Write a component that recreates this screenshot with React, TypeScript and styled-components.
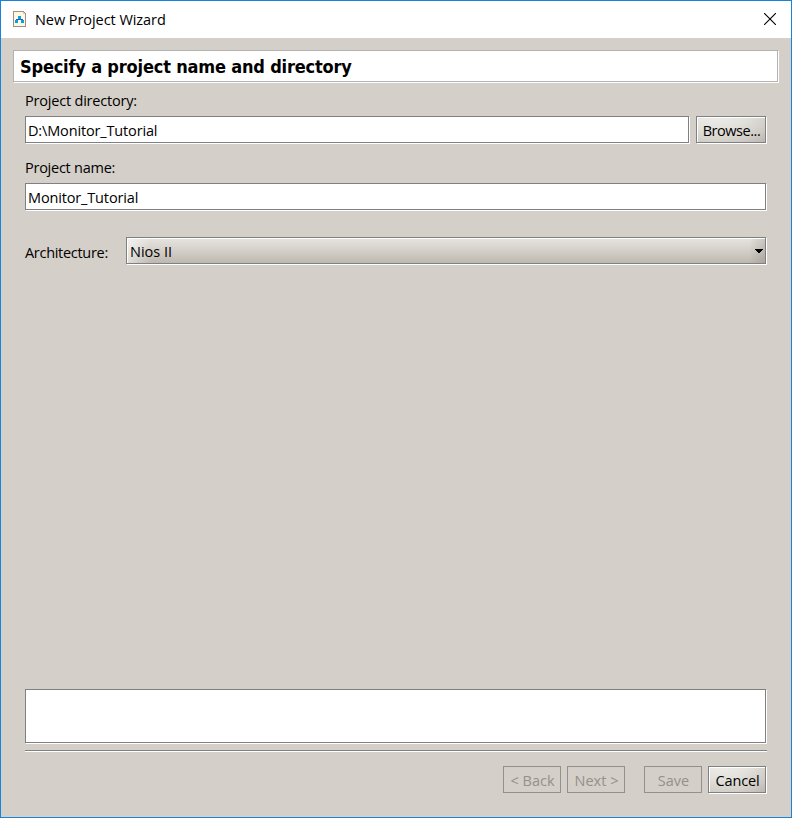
import React from 'react';
import styled, { createGlobalStyle, css } from 'styled-components';

const GlobalStyle = createGlobalStyle`
  * { box-sizing: border-box; }
  body { margin: 0; background: #d4cfc8; }
`;

const etched = css`
  border: 1px solid #808080;
  box-shadow: 1px 1px 0 #fff;
`;

const Window = styled.div`
  width: 792px;
  height: 818px;
  display: flex;
  flex-direction: column;
  border: 1px solid #1883d7;
  background: #d4cfc8;
  color: #000;
  font: 14.5px/20px 'Open Sans', 'Noto Sans', sans-serif;
  white-space: nowrap;
`;

const TitleBar = styled.header`
  display: flex;
  align-items: flex-start;
  height: 37px;
  padding: 9px 15px 0 12px;
  background: #fff;
`;

const Title = styled.h1`
  flex: 1;
  margin: 0 0 0 9px;
  font: inherit;
  letter-spacing: -0.06px;
`;

const AppIcon = styled.svg`
  margin-top: 1px;
`;

const CloseButton = styled.button`
  display: flex;
  margin: 3px 0 0;
  padding: 0;
  border: 0;
  background: none;
`;

const Heading = styled.h2`
  height: 32px;
  margin: 12px 13px 0 12px;
  padding: 5px 6px 0;
  border: 1px solid #b2b2b2;
  box-shadow: 1px 1px 0 #fff;
  background: #fff;
  font: bold 18px/22px 'DejaVu Sans Condensed', 'DejaVu Sans', sans-serif;
  letter-spacing: -0.18px;
`;

const Form = styled.main`
  flex: 1;
  display: flex;
  flex-direction: column;
  padding: 9px 25px 0 24px;
`;

const Label = styled.label<{ $spacing?: number }>`
  letter-spacing: ${(p) => p.$spacing ?? -0.2}px;
`;

const FieldRow = styled.div`
  display: flex;
  gap: 7px;
  margin: 5px 0 15px;
`;

const TextField = styled.div`
  ${etched}
  flex: 1;
  height: 27px;
  padding: 4px 2px 0;
  background: #fff;
  letter-spacing: -0.15px;
`;

const Button = styled.button<{ $width: number; $spacing?: number }>`
  ${etched}
  width: ${(p) => p.$width}px;
  height: 27px;
  padding: 4px 0 0 1px;
  display: flex;
  justify-content: center;
  align-items: flex-start;
  background: radial-gradient(ellipse 120% 190% at 25% -35%, #f4f3f1 0%, #e3e1dc 45%, #d0ccc5 75%, #b5b1aa 100%);
  box-shadow: 1px 1px 0 #fff, inset 1px 1px 0 #fff;
  color: #000;
  font: inherit;
  letter-spacing: ${(p) => p.$spacing ?? 0}px;

  &:disabled {
    border-color: #94908b;
    background: none;
    box-shadow: none;
    color: #94908b;
  }
`;

const SelectRow = styled.div`
  display: flex;
  margin-top: 12px;
`;

const SelectLabel = styled(Label)`
  width: 101px;
  padding-top: 6px;
`;

const Select = styled.div`
  ${etched}
  flex: 1;
  display: flex;
  justify-content: space-between;
  height: 27px;
  padding: 4px 2px 0 3px;
  background:
    linear-gradient(to right, transparent calc(100% - 16px), rgba(90, 85, 75, 0.2)),
    linear-gradient(to right, rgba(255, 255, 255, 0.55), transparent 24px),
    linear-gradient(#e6e4e0, #d4d0c9 50%, #bdb9b1);
  box-shadow: 1px 1px 0 #fff, inset 1px 1px 0 #fff;
`;

const Arrow = styled.svg`
  margin-top: 7px;
`;

const MessageArea = styled.div`
  ${etched}
  height: 54px;
  margin: auto 0 7px;
  background: #fff;
`;

const Divider = styled.hr`
  width: calc(100% + 1px);
  height: 2px;
  margin: 0;
  border: 0;
  border-top: 1px solid #808080;
  border-bottom: 1px solid #fff;
`;

const Footer = styled.footer`
  display: flex;
  justify-content: flex-end;
  gap: 6px;
  padding: 14px 25px 24px;
`;

const ButtonGroup = styled.div`
  display: flex;
  gap: 6px;
  margin-right: 13px;
`;

export default function App() {
  return (
    <>
      <GlobalStyle />
      <Window>
        <TitleBar>
          <AppIcon width="13" height="16" viewBox="0 0 13 16" shapeRendering="crispEdges">
            <path d="M.5.5h10l2 2v13H.5z" fill="#fff8e1" stroke="#a18f83" />
            <path d="M10.5 1v1.5H12" fill="none" stroke="#d9cbbb" />
            <path d="M6.5 8v1M3.5 10V8.5h6V10" fill="none" stroke="#2b6597" />
            <path d="M5 5h3v3H5zM2 9h3v3H2zM8 9h3v3H8z" fill="#00a2f0" />
          </AppIcon>
          <Title>New Project Wizard</Title>
          <CloseButton aria-label="Close">
            <svg width="12" height="12" viewBox="0 0 12 12">
              <path d="M0 0l12 12M12 0L0 12" stroke="#000" strokeWidth="1.1" />
            </svg>
          </CloseButton>
        </TitleBar>
        <Heading>Specify a project name and directory</Heading>
        <Form>
          <Label>Project directory:</Label>
          <FieldRow>
            <TextField>D:\Monitor_Tutorial</TextField>
            <Button $width={70} $spacing={-0.46}>Browse...</Button>
          </FieldRow>
          <Label $spacing={-0.25}>Project name:</Label>
          <FieldRow>
            <TextField>Monitor_Tutorial</TextField>
          </FieldRow>
          <SelectRow>
            <SelectLabel $spacing={-0.3}>Architecture:</SelectLabel>
            <Select>
              Nios II
              <Arrow width="8" height="5" viewBox="0 0 8 5" shapeRendering="crispEdges">
                <path d="M0 0h8v1H7v1H6v1H5v1H3V3H2V2H1V1H0z" />
              </Arrow>
            </Select>
          </SelectRow>
          <MessageArea />
          <Divider />
        </Form>
        <Footer>
          <ButtonGroup>
            <Button $width={58} disabled>&lt; Back</Button>
            <Button $width={58} disabled>Next &gt;</Button>
          </ButtonGroup>
          <Button $width={58} disabled>Save</Button>
          <Button $width={58} $spacing={-0.15}>Cancel</Button>
        </Footer>
      </Window>
    </>
  );
}
